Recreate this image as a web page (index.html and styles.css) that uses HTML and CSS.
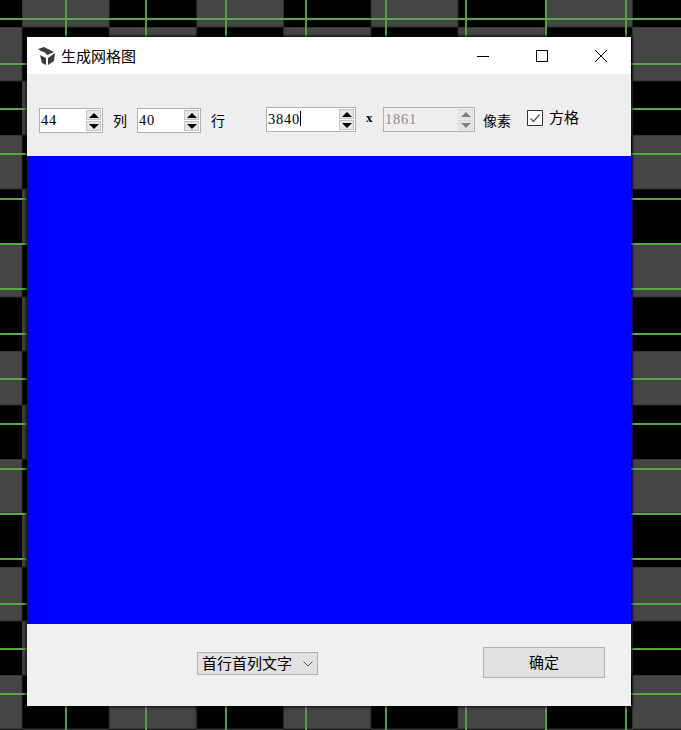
FILE: index.html
```html
<!DOCTYPE html>
<html lang="zh-CN">
<head>
<meta charset="utf-8">
<title>生成网格图</title>
<link rel="stylesheet" href="styles.css">
</head>
<body>
<svg class="backdrop" width="681" height="730" viewBox="0 0 681 730">
  <defs>
    <pattern id="cells" width="174.4" height="108" x="22" y="27" patternUnits="userSpaceOnUse">
      <rect x="0" y="-54" width="87.2" height="54" fill="#454545" stroke="#2c2c2c"/>
      <rect x="0" y="54" width="87.2" height="54" fill="#454545" stroke="#2c2c2c"/>
      <rect x="87.2" y="0" width="87.2" height="54" fill="#454545" stroke="#2c2c2c"/>
      <rect x="-87.2" y="0" width="87.2" height="54" fill="#454545" stroke="#2c2c2c"/>
    </pattern>
    <pattern id="vlines" width="80" height="730" x="0" y="0" patternUnits="userSpaceOnUse">
      <rect x="65" y="0" width="2" height="730" fill="#56a044"/>
    </pattern>
    <pattern id="hlines" width="681" height="45" x="0" y="0" patternUnits="userSpaceOnUse">
      <rect x="0" y="18" width="681" height="2" fill="#58a846"/>
    </pattern>
  </defs>
  <rect width="681" height="730" fill="#000"/>
  <rect width="681" height="730" fill="url(#cells)"/>
  <rect width="681" height="730" fill="url(#vlines)"/>
  <rect width="681" height="730" fill="url(#hlines)"/>
</svg>
<section class="window">
  <header class="titlebar">
    <svg class="app-icon" width="18" height="18" viewBox="0 0 18 18"><path fill="#3a3a3a" d="M0 2 6 0 16 5 9 8 7 5.5 3 4zM2 8 8 11V18L4 16zM10 11 17 6 16 14 10 18z"/></svg>
    <h1 class="title">生成网格图</h1>
    <div class="controls">
      <svg width="14" height="14" viewBox="0 0 14 14"><path d="M1 7.5H13" stroke="#000" fill="none"/></svg>
      <svg width="14" height="14" viewBox="0 0 14 14"><path d="M1.5 1.5H12.5V12.5H1.5z" stroke="#000" fill="none"/></svg>
      <svg width="14" height="14" viewBox="0 0 14 14"><path d="M1 1 13 13M13 1 1 13" stroke="#000" fill="none"/></svg>
    </div>
  </header>
  <div class="toolbar">
    <div class="spin spin-small"><span class="value">44</span><span class="arrows"><i class="up"></i><i class="down"></i></span></div>
    <span class="label gap-a">列</span>
    <div class="spin spin-small gap-b"><span class="value">40</span><span class="arrows"><i class="up"></i><i class="down"></i></span></div>
    <span class="label gap-a">行</span>
    <div class="spin spin-wide gap-c"><span class="value">3840<b class="caret"></b></span><span class="arrows"><i class="up"></i><i class="down"></i></span></div>
    <span class="times">x</span>
    <div class="spin spin-wider off"><span class="value">1861</span><span class="arrows"><i class="up"></i><i class="down"></i></span></div>
    <span class="label gap-d">像素</span>
    <span class="check"><svg width="16" height="16" viewBox="0 0 16 16"><path d="M.5.5H15.5V15.5H.5z" fill="#fff" stroke="#333"/><path d="M3.5 8.5 6.5 11.5 12.5 4.5" fill="none" stroke="#555" stroke-width="1.3"/></svg></span>
    <span class="label gap-e">方格</span>
  </div>
  <div class="canvas"></div>
  <footer class="footer">
    <div class="combo"><span>首行首列文字</span><svg width="10" height="6" viewBox="0 0 10 6"><path d="M.5.5 5 5 9.5.5" fill="none" stroke="#555"/></svg></div>
    <button class="ok" type="button">确定</button>
  </footer>
</section>
</body>
</html>
```

FILE: styles.css
```css
html, body {
  margin: 0;
  height: 100%;
  overflow: hidden;
}
body {
  position: relative;
  width: 681px;
  height: 730px;
  font-family: "Noto Sans CJK SC", "Liberation Sans", sans-serif;
  background: #000;
}
.backdrop {
  position: absolute;
  left: 0;
  top: 0;
  display: block;
}
.window {
  position: absolute;
  left: 27px;
  top: 37px;
  width: 604px;
  height: 669px;
  display: flex;
  flex-direction: column;
  box-shadow: 0 0 3px 1px rgba(0, 0, 0, .9);
  color: #000;
}
.titlebar {
  height: 37px;
  background: #fff;
  display: flex;
  align-items: center;
  padding-left: 11px;
}
.title {
  margin: 0 0 0 5px;
  font-size: 15px;
  font-weight: 400;
  line-height: 37px;
}
.controls {
  margin-left: auto;
  margin-right: 23px;
  display: flex;
  gap: 45px;
}
.toolbar {
  box-sizing: border-box;
  height: 82px;
  background: #eee;
  display: flex;
  align-items: flex-start;
  padding: 33px 0 0 12px;
  font-size: 14px;
}
.spin {
  box-sizing: border-box;
  height: 25px;
  border: 1px solid #b0b0b0;
  background: #fff;
  display: flex;
  align-items: center;
  justify-content: space-between;
}
.spin-small { width: 64px; margin-top: 1px; }
.spin-wide { width: 90px; }
.spin-wider { width: 92px; }
.value {
  font-family: "Liberation Serif", serif;
  font-size: 14.5px;
  letter-spacing: .75px;
  line-height: 20px;
  margin-top: -2px;
  padding-left: 1px;
  display: flex;
  align-items: center;
}
.caret {
  display: block;
  width: 1px;
  height: 15px;
  background: #000;
}
.arrows {
  width: 15px;
  height: 21px;
  margin-right: 1px;
  display: flex;
  flex-direction: column;
  gap: 1px;
}
.arrows i {
  flex: 1;
  box-sizing: border-box;
  background: #e6e6e6;
  border: 1px solid #c4c4c4;
  display: flex;
  align-items: center;
  justify-content: center;
}
.arrows i::before {
  content: "";
  border-left: 5px solid transparent;
  border-right: 5px solid transparent;
}
.up::before { border-bottom: 5px solid #000; }
.down::before { border-top: 5px solid #000; }
.off { background: #eee; color: #8c8c8c; }
.off .arrows i { background: #e6e6e6; border-color: #dcdcdc; }
.off .up::before { border-bottom-color: #808080; }
.off .down::before { border-top-color: #808080; }
.label { line-height: 22px; }
.gap-a { margin-left: 10px; margin-top: 2px; }
.gap-b { margin-left: 10px; }
.gap-c { margin-left: 41px; }
.gap-d { margin-left: 8px; margin-top: 2px; }
.gap-e { margin-left: 6px; margin-top: -1px; font-size: 15px; }
.times {
  margin: 1px 10px 0;
  font: 700 13px/20px "Liberation Serif", serif;
  width: 7px;
}
.check {
  margin: 3px 0 0 16px;
  display: flex;
}
.canvas {
  height: 468px;
  background: #00f;
}
.footer {
  box-sizing: border-box;
  height: 82px;
  background: #f0f0f0;
  display: flex;
  align-items: center;
  padding: 0 26px 5px 170px;
  font-size: 15px;
}
.combo {
  box-sizing: border-box;
  width: 121px;
  height: 23px;
  margin-top: 2px;
  border: 1px solid #b0b0b0;
  background: #e1e1e1;
  display: flex;
  align-items: center;
  justify-content: space-between;
  padding: 0 4px 0 4px;
  line-height: 19px;
}
.combo span { margin-top: -2px; }
.ok {
  box-sizing: border-box;
  margin-left: auto;
  width: 122px;
  height: 31px;
  padding: 0 0 2px;
  border: 1px solid #b0b0b0;
  background: #e1e1e1;
  color: #000;
  font: inherit;
}
```
